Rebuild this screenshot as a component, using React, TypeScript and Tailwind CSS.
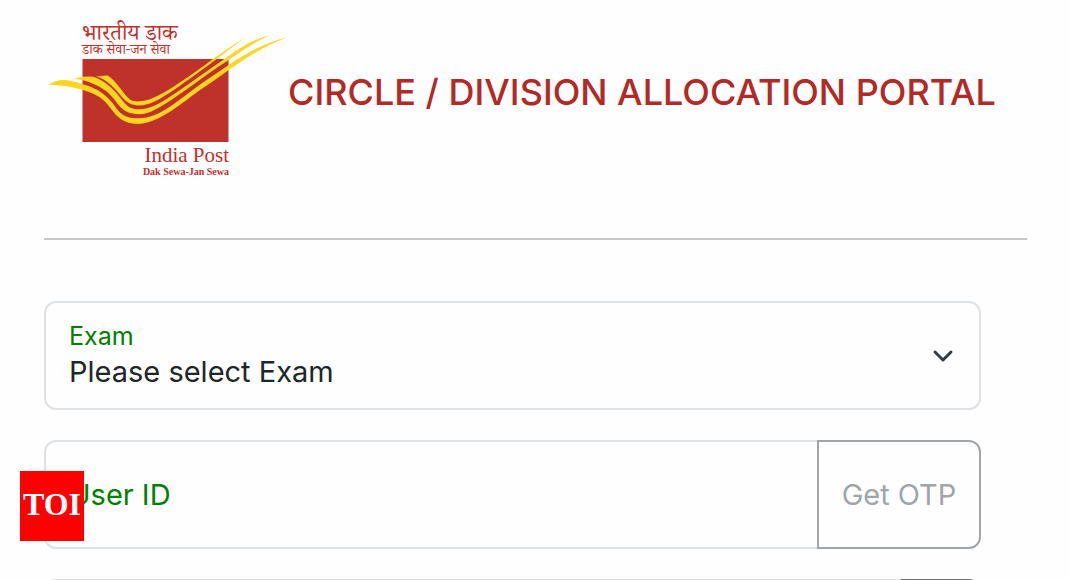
import { ChevronDown } from "lucide-react"

function IndiaPostLogo() {
  return (
    <svg viewBox="48 16 240 162" className="w-60 shrink-0" role="img" aria-label="India Post">
      <g fill="#bf322c">
        <text x="82" y="40" fontSize="22" fontFamily="'Noto Serif Devanagari', 'Noto Sans Devanagari', 'Noto Sans', serif">
          भारतीय डाक
        </text>
        <text x="82" y="54" fontSize="14" fontFamily="'Noto Serif Devanagari', 'Noto Sans Devanagari', 'Noto Sans', serif">
          डाक सेवा-जन सेवा
        </text>
        <rect x="82.5" y="59" width="146" height="83" />
        <text x="229" y="162" fontSize="21" textAnchor="end" fontFamily="'Liberation Serif', serif">
          India Post
        </text>
        <text x="229" y="175" fontSize="10" fontWeight="700" textAnchor="end" fontFamily="'Liberation Serif', serif">
          Dak Sewa-Jan Sewa
        </text>
      </g>
      <g fill="#ffd51f">
        <path d="M48 84.5C54 82 58 80 63 80C70 80 77 82.5 82 84C91 86.5 99 90 105 95.5C113 102 115 107 120 112.5C125 117 130 118.3 138 118.3C150 118.3 160 113 170 106.7C181 99 190 92 200 84.5L228 65.5C249 51 266 43 287 37.3C269 44.5 252 53.500 228 70.5C218 78 209 84 200 90C190 97.5 180 105 170 111.7C158 119 148 123.9 137 123.9C129 123.9 122 121 116 115C111 109 108 105 105 101.5C98 95 91 92.5 83 90C73 87 60 85 48 84.5Z" />
        <path d="M74 78.5L82 76.8L92 76.6C99 78 106 83 112 88.5C118 94 121 99 125 103.5C129 108 133 109.2 139 109.2C150 109.2 160 103.5 170 96.8C181 89.5 190 83 200 76L228 56.5C242 46 256 38.5 270 35.2C256 41 243 50 228 60.5C218 67 209 73 200 79.8C190 87 180 94 170 100.7C160 107 150 114.2 139 114.2C130 114.2 124 111 119 105.5C114 99 111 95 106 91C98 85.5 90 81 74 78.5Z" />
        <path d="M96 76.2L107.5 75.6C112 78 116 83 120 88C124 93.5 127 97 130 99.5C133 101.6 137 101.6 140 101.3C150 100.5 160 95 170 89C181 82 190 75.5 200 68.5C216 57 232 45 245 38C233 46 216 60 200 71.3C190 78.5 180 86 170 92.5C159 99.5 150 105.4 139 105.4C131 105.4 127 102.5 122 97C116 90 108 79.5 96 76.2Z" />
      </g>
    </svg>
  )
}

function Header() {
  return (
    <header className="flex h-60 items-start border-b-2 border-[#c8c8c8] pt-4 pl-1">
      <IndiaPostLogo />
      <h1 className="flex-1 pt-12 text-4xl leading-14 font-medium whitespace-nowrap text-[#b12a26]">
        CIRCLE / DIVISION ALLOCATION PORTAL
      </h1>
    </header>
  )
}

function ExamField() {
  return (
    <div className="flex h-[109px] items-center rounded-xl border-2 border-[#dee2e6] pr-5 pl-[23px]">
      <div className="flex flex-1 flex-col">
        <label htmlFor="exam" className="text-[25px] leading-8 text-[#008000]">
          Exam
        </label>
        <select id="exam" className="h-10 appearance-none bg-transparent text-[29px] leading-10 text-[#212529] outline-none">
          <option>Please select Exam</option>
        </select>
      </div>
      <ChevronDown className="pointer-events-none h-8 w-8 text-[#343a40]" strokeWidth={2.2} />
    </div>
  )
}

function UserIdField() {
  return (
    <div className="flex h-[109px]">
      <div className="flex min-w-0 flex-1 items-center rounded-l-xl border-2 border-r-0 border-[#dee2e6] px-[23px]">
        <label htmlFor="user-id" className="text-[29px] leading-10 text-[#008000]">
          User ID
        </label>
        <input id="user-id" type="text" className="h-full min-w-0 flex-1 bg-transparent pl-4 text-[29px] text-[#212529] outline-none" />
      </div>
      <button type="button" className="w-[164px] rounded-r-xl border-2 border-[#a0a5aa] text-[29px] text-[#a0a5aa]">
        Get OTP
      </button>
    </div>
  )
}

function OtpField() {
  return (
    <div className="flex h-[109px] shrink-0">
      <input type="text" aria-label="OTP" className="min-w-0 flex-1 rounded-l-xl border-2 border-r-0 border-[#dee2e6] px-6 outline-none" />
      <button type="button" aria-label="Verify OTP" className="w-20 rounded-r-xl border-2 border-[#6c757d]" />
    </div>
  )
}

export default function App() {
  return (
    <main className="relative h-screen overflow-hidden bg-[#fefefe] pr-[42px] pl-11 font-['Inter','Noto_Sans',sans-serif]">
      <Header />
      <form className="flex flex-col gap-[30px] pt-[61px] pr-[46px]">
        <ExamField />
        <UserIdField />
        <OtpField />
      </form>
      <div className="absolute bottom-[39px] left-5 flex h-[70px] w-16 items-center justify-center bg-[#ff0000] pb-1 font-['Liberation_Serif',serif] text-[32px] font-bold text-white">
        TOI
      </div>
    </main>
  )
}
